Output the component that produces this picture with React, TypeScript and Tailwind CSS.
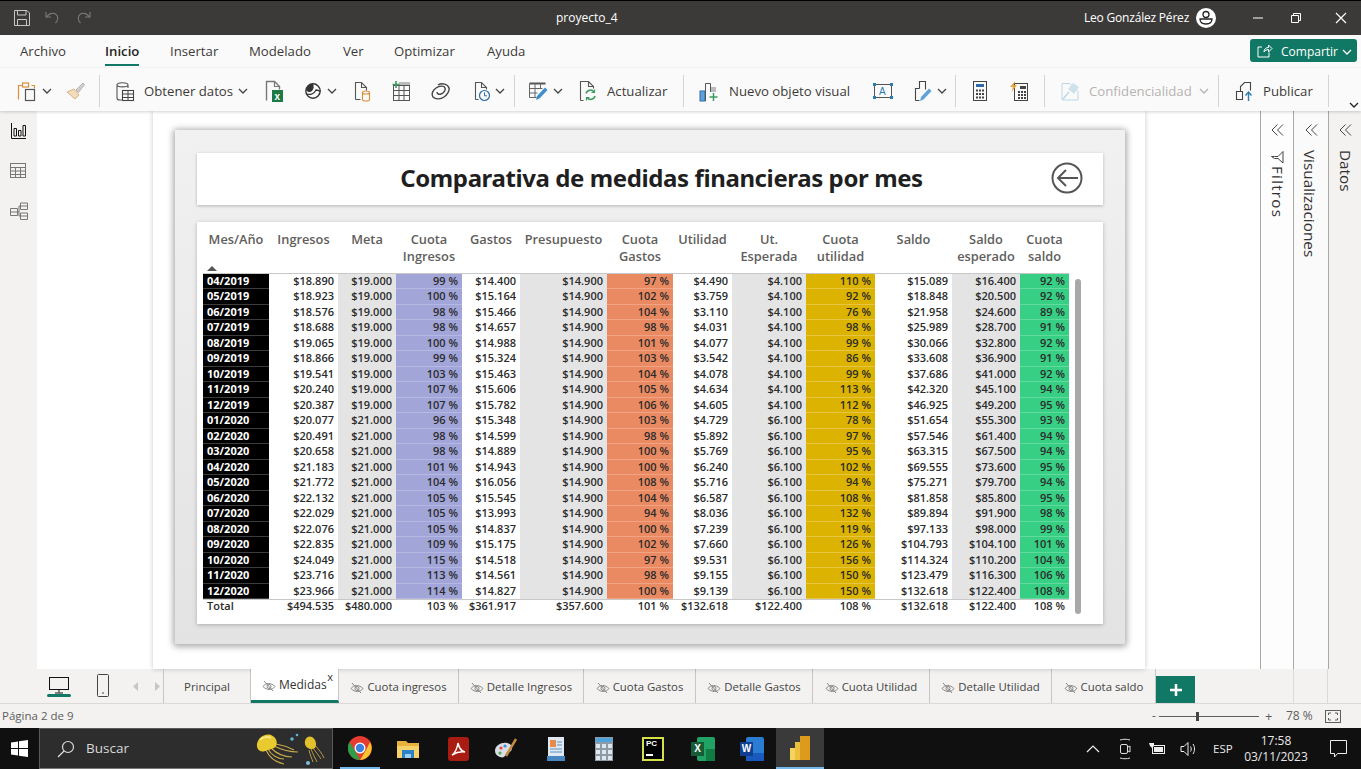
import type { ReactNode } from 'react';

const rows = [
  ['04/2019', '$18.890', '$19.000', '99 %', '$14.400', '$14.900', '97 %', '$4.490', '$4.100', '110 %', '$15.089', '$16.400', '92 %'],
  ['05/2019', '$18.923', '$19.000', '100 %', '$15.164', '$14.900', '102 %', '$3.759', '$4.100', '92 %', '$18.848', '$20.500', '92 %'],
  ['06/2019', '$18.576', '$19.000', '98 %', '$15.466', '$14.900', '104 %', '$3.110', '$4.100', '76 %', '$21.958', '$24.600', '89 %'],
  ['07/2019', '$18.688', '$19.000', '98 %', '$14.657', '$14.900', '98 %', '$4.031', '$4.100', '98 %', '$25.989', '$28.700', '91 %'],
  ['08/2019', '$19.065', '$19.000', '100 %', '$14.988', '$14.900', '101 %', '$4.077', '$4.100', '99 %', '$30.066', '$32.800', '92 %'],
  ['09/2019', '$18.866', '$19.000', '99 %', '$15.324', '$14.900', '103 %', '$3.542', '$4.100', '86 %', '$33.608', '$36.900', '91 %'],
  ['10/2019', '$19.541', '$19.000', '103 %', '$15.463', '$14.900', '104 %', '$4.078', '$4.100', '99 %', '$37.686', '$41.000', '92 %'],
  ['11/2019', '$20.240', '$19.000', '107 %', '$15.606', '$14.900', '105 %', '$4.634', '$4.100', '113 %', '$42.320', '$45.100', '94 %'],
  ['12/2019', '$20.387', '$19.000', '107 %', '$15.782', '$14.900', '106 %', '$4.605', '$4.100', '112 %', '$46.925', '$49.200', '95 %'],
  ['01/2020', '$20.077', '$21.000', '96 %', '$15.348', '$14.900', '103 %', '$4.729', '$6.100', '78 %', '$51.654', '$55.300', '93 %'],
  ['02/2020', '$20.491', '$21.000', '98 %', '$14.599', '$14.900', '98 %', '$5.892', '$6.100', '97 %', '$57.546', '$61.400', '94 %'],
  ['03/2020', '$20.658', '$21.000', '98 %', '$14.889', '$14.900', '100 %', '$5.769', '$6.100', '95 %', '$63.315', '$67.500', '94 %'],
  ['04/2020', '$21.183', '$21.000', '101 %', '$14.943', '$14.900', '100 %', '$6.240', '$6.100', '102 %', '$69.555', '$73.600', '95 %'],
  ['05/2020', '$21.772', '$21.000', '104 %', '$16.056', '$14.900', '108 %', '$5.716', '$6.100', '94 %', '$75.271', '$79.700', '94 %'],
  ['06/2020', '$22.132', '$21.000', '105 %', '$15.545', '$14.900', '104 %', '$6.587', '$6.100', '108 %', '$81.858', '$85.800', '95 %'],
  ['07/2020', '$22.029', '$21.000', '105 %', '$13.993', '$14.900', '94 %', '$8.036', '$6.100', '132 %', '$89.894', '$91.900', '98 %'],
  ['08/2020', '$22.076', '$21.000', '105 %', '$14.837', '$14.900', '100 %', '$7.239', '$6.100', '119 %', '$97.133', '$98.000', '99 %'],
  ['09/2020', '$22.835', '$21.000', '109 %', '$15.175', '$14.900', '102 %', '$7.660', '$6.100', '126 %', '$104.793', '$104.100', '101 %'],
  ['10/2020', '$24.049', '$21.000', '115 %', '$14.518', '$14.900', '97 %', '$9.531', '$6.100', '156 %', '$114.324', '$110.200', '104 %'],
  ['11/2020', '$23.716', '$21.000', '113 %', '$14.561', '$14.900', '98 %', '$9.155', '$6.100', '150 %', '$123.479', '$116.300', '106 %'],
  ['12/2020', '$23.966', '$21.000', '114 %', '$14.827', '$14.900', '100 %', '$9.139', '$6.100', '150 %', '$132.618', '$122.400', '108 %'],
];
const total = ['Total', '$494.535', '$480.000', '103 %', '$361.917', '$357.600', '101 %', '$132.618', '$122.400', '108 %', '$132.618', '$122.400', '108 %'];
const headers = [['Mes/Año'], ['Ingresos'], ['Meta'], ['Cuota', 'Ingresos'], ['Gastos'], ['Presupuesto'], ['Cuota', 'Gastos'], ['Utilidad'], ['Ut.', 'Esperada'], ['Cuota', 'utilidad'], ['Saldo'], ['Saldo', 'esperado'], ['Cuota', 'saldo']];

// background per column, index matches the row arrays
const colBg = [
  'bg-black text-white font-bold pl-1 text-left border-b border-[#3c3c3c]',
  'text-right',
  'bg-[#e4e4e4] text-right',
  'bg-[#a1a5d8] border-b border-[#b5b8e2] text-right',
  'text-right',
  'bg-[#e4e4e4] text-right',
  'bg-[#ea8a62] border-b border-[#f0a484] text-right',
  'text-right',
  'bg-[#e4e4e4] text-right',
  'bg-[#dcb300] border-b border-[#e6c640] text-right',
  'text-right',
  'bg-[#e4e4e4] text-right',
  'bg-[#37cf83] border-b border-[#62da9e] text-right',
];

function Icon({ w, h, children, className = '' }: { w: number; h: number; children: ReactNode; className?: string }) {
  return (
    <svg width={w} height={h} viewBox={`0 0 ${w} ${h}`} fill="none" className={`shrink-0 ${className}`}>
      {children}
    </svg>
  );
}

const Chev = ({ className = '', color = '#444' }: { className?: string; color?: string }) => (
  <Icon w={10} h={6} className={className}>
    <path d="M1 1l4 4 4-4" stroke={color} strokeWidth="1.3" />
  </Icon>
);
const Sep = ({ className = '' }: { className?: string }) => <div className={`w-px h-[32px] bg-[#d6d4d2] shrink-0 ${className}`} />;

function Toolbar() {
  return (
    <div className="h-[43px] pt-[3px] flex items-center bg-[#fbfafa] shadow-[0_1px_3px_rgba(0,0,0,0.18)] relative z-10 text-[#3b3a39] text-[13.2px]">
      <Icon w={22} h={22} className="ml-[16px]">
        <path d="M2.5 19.5V5.5h4M15.5 5.5h3v3" stroke="#d8913a" strokeWidth="1.2" />
        <rect x="6.5" y="3" width="6" height="4" stroke="#d8913a" strokeWidth="1.2" />
        <rect x="9.5" y="9.5" width="9" height="11" stroke="#555" strokeWidth="1.2" />
      </Icon>
      <Chev className="ml-[4px]" />
      <Icon w={20} h={20} className="ml-[14px]">
        <path d="M1 11l7-3 5 6-4 4z" fill="#f3dcbc" stroke="#d9b489" />
        <path d="M10 9l7-7 1.500 1.500-6 8z" fill="#cfcfcf" stroke="#b5b5b5" />
      </Icon>
      <Sep className="ml-[13px]" />
      <Icon w={21} h={22} className="ml-[16px]">
        <path d="M1 5v13c0 1 1 2 3 2h2M1 5c0-3 11-3 11 0v3M1 5c0 2.500 11 2.500 11 0" stroke="#555" strokeWidth="1.1" />
        <rect x="6.500" y="10.500" width="11" height="10" stroke="#444" strokeWidth="1.1" />
        <path d="M6.500 14h11M6.500 17.500h11M12 10.500v10" stroke="#444" />
      </Icon>
      <span className="ml-[7px] w-[89px] pt-[2px] whitespace-nowrap">Obtener datos</span>
      <Chev className="ml-[5px]" />
      <Icon w={18} h={22} className="ml-[17px]">
        <path d="M1.500 20.500v-19h8l5 5v3" stroke="#777" strokeWidth="1.4" />
        <path d="M9.500 1.500v5h5" stroke="#777" strokeWidth="1.2" />
        <rect x="7" y="10" width="11" height="12" fill="#1d7a45" />
        <text x="9.500" y="20" fill="#fff" fontSize="10" fontWeight="700" fontFamily="Liberation Sans">x</text>
      </Icon>
      <Icon w={18} h={18} className="ml-[21px]">
        <circle cx="9" cy="9" r="7.200" stroke="#333" strokeWidth="1.400" />
        <path d="M2 8c1-4 4-6 7-6 1 2 1 5-1 7-2 1.500-4 1.500-6-1z" fill="#333" />
        <path d="M3 12c3 1 7 0 9-4 1.500 0 3 .500 4 1.500" stroke="#333" strokeWidth="1.300" />
      </Icon>
      <Chev className="ml-[5px]" />
      <Icon w={18} h={22} className="ml-[16px]">
        <path d="M2.500 19.500v-17h6l5 5v3M8.500 2.500v5h5M2.500 19.500h5" stroke="#555" strokeWidth="1.1" />
        <path d="M9.500 12.500c0-2 7-2 7 0v7c0 2-7 2-7 0zM9.500 12.500c0 2 7 2 7 0" stroke="#d8913a" strokeWidth="1.1" />
      </Icon>
      <Icon w={20} h={22} className="ml-[20px]">
        <rect x="2.500" y="5.500" width="16" height="15" stroke="#555" />
        <rect x="8" y="2" width="11" height="3" fill="#bbb" />
        <path d="M2.500 10.500h16M2.500 15.500h16M8 5.500v15M13 5.500v15" stroke="#555" />
        <path d="M5 1v7M1.500 4.500h7" stroke="#3c9a62" strokeWidth="1.6" />
      </Icon>
      <Icon w={19} h={19} className="ml-[20px]">
        <path d="M7 3c4-2.500 10-1 11 3 .700 3-2 7-5 9-3 2-8 3-11 0-2-3 0-7 3-9 3-2 8-3 9 0 .700 2-1 5-4 6-2 .700-4 0-4-2" stroke="#444" strokeWidth="1.400" />
      </Icon>
      <Icon w={18} h={22} className="ml-[23px]">
        <path d="M2.500 19.500v-17h6l5 5v2M8.500 2.500v5h5M2.500 19.500h3" stroke="#555" strokeWidth="1.1" />
        <circle cx="11.500" cy="15.500" r="5" stroke="#2b6ca8" strokeWidth="1.2" />
        <path d="M11.500 12.500v3.300h2.500" stroke="#2b6ca8" />
      </Icon>
      <Chev className="ml-[4px]" />
      <Sep className="ml-[9px]" />
      <Icon w={20} h={22} className="ml-[13px]">
        <path d="M1.500 3.500h16" stroke="#555" strokeWidth="2" />
        <path d="M1.500 3.500v14h7M7 3.500v14M12.500 3.500v5M1.500 8.500h13M1.500 13h8" stroke="#666" />
        <path d="M8 20l1-4 8-8.500 2.500 2.500-8 8.500z" fill="#3e8ed0" />
      </Icon>
      <Chev className="ml-[5px]" />
      <Icon w={18} h={22} className="ml-[16px]">
        <path d="M1.500 20.500v-19h8l5 5v2M9.500 1.500v5h5M1.500 20.500h3" stroke="#555" strokeWidth="1.1" />
        <path d="M7 13.500a4.500 4.500 0 018-1.500M16 16a4.500 4.500 0 01-8 1.500" stroke="#3c9a62" strokeWidth="1.5" />
        <path d="M15.500 9.500v3h-3M7.500 20.500v-3h3" stroke="#3c9a62" strokeWidth="1.2" />
      </Icon>
      <span className="ml-[10px] w-[60px] pt-[2px] whitespace-nowrap">Actualizar</span>
      <Sep className="ml-[16px]" />
      <Icon w={20} h={22} className="ml-[15px]">
        <rect x="1" y="11" width="5" height="10" fill="#5ea2dc" stroke="#2b6ca8" />
        <path d="M6.500 21V3.500h5V12" stroke="#555" />
        <rect x="12" y="7" width="5" height="5" fill="#bbb" />
        <path d="M14.500 13v8M10.500 17h8" stroke="#3c9a62" strokeWidth="1.5" />
      </Icon>
      <span className="ml-[10px] w-[123px] pt-[2px] whitespace-nowrap">Nuevo objeto visual</span>
      <Icon w={20} h={18} className="ml-[21px]">
        <rect x="1.500" y="2.500" width="17" height="13" stroke="#555" />
        <path d="M0 1h3v3H0zM17 1h3v3h-3zM0 14h3v3H0zM17 14h3v3h-3z" fill="#2b7cb3" />
        <text x="6" y="13" fill="#2b7cb3" fontSize="10" fontFamily="Liberation Sans">A</text>
      </Icon>
      <Icon w={18} h={22} className="ml-[21px]">
        <path d="M1.500 20.500v-12h4M5.500 8.500v-7h6v8M1.500 20.500h4" stroke="#444" strokeWidth="1.100" />
        <path d="M6 21l1-4 8-8.500 2.500 2.500-8 8.500z" fill="#5ea2dc" />
      </Icon>
      <Chev className="ml-[5px]" />
      <Sep className="ml-[8px]" />
      <Icon w={14} h={20} className="ml-[17px]">
        <rect x="0.500" y="0.500" width="13" height="19" stroke="#444" />
        <rect x="3" y="3" width="8" height="3" fill="#2b6ca8" />
        <path d="M3 8.500h2v2H3zM6 8.500h2v2H6zM9 8.500h2v2H9zM3 12h2v2H3zM6 12h2v2H6zM9 12h2v2H9zM3 15.500h2v2H3zM6 15.500h2v2H6zM9 15.500h2v2H9z" fill="#444" />
      </Icon>
      <Icon w={18} h={20} className="ml-[23px]">
        <rect x="4.500" y="2.500" width="13" height="17" stroke="#444" />
        <path d="M8 10h2v2H8zM11 10h2v2h-2zM14 10h2v2h-2zM8 13h2v2H8zM11 13h2v2h-2zM14 13h2v2h-2zM8 16h2v2H8zM11 16h2v2h-2zM14 16h2v2h-2zM10 5h6v3h-6z" fill="#444" />
        <path d="M5 0L0 6h3L1.500 11 7 4H4z" fill="#e8a33d" />
      </Icon>
      <Sep className="ml-[16px]" />
      <Icon w={19} h={22} className="ml-[16px]">
        <path d="M1 3.500h8l8 8V20H1z" stroke="#bcd8e8" />
        <path d="M7 9l5-6 6 4-5 7z" fill="#cfe2ec" />
        <path d="M2 19l6-7" stroke="#bcd8e8" strokeWidth="1.500" />
      </Icon>
      <span className="ml-[9px] w-[104px] pt-[2px] whitespace-nowrap text-[#b5b3b1]">Confidencialidad</span>
      <Chev className="ml-[6px]" color="#b5b3b1" />
      <Sep className="ml-[9px]" />
      <Icon w={19} h={20} className="ml-[16px]">
        <path d="M1.500 10.500h6v8h-6zM5.500 10.500v-5l4-4h6v8" stroke="#444" strokeWidth="1.100" />
        <path d="M13.500 20v-8M10.500 14.500l3-3.500 3 3.500" stroke="#2b7cb3" strokeWidth="1.400" />
      </Icon>
      <span className="ml-[9px] w-[49px] pt-[2px] whitespace-nowrap">Publicar</span>
      <Sep className="ml-[16px]" />
      <Chev className="ml-[20px] self-end mb-[3px]" color="#222" />
    </div>
  );
}

function Report() {
  return (
    <div className="w-[950px] h-[514px] mt-[19px] ml-[22px] pt-[23px] px-[22px] bg-gradient-to-b from-[#f1f1f1] to-[#e3e3e3] shadow-[0_1px_6px_2px_rgba(0,0,0,0.32)] rounded-[2px]">
      <div className="h-[52px] bg-white shadow-[0_1px_3px_rgba(0,0,0,0.25)] flex items-center relative">
        <h1 className="w-[906px] pl-[23px] pb-[3px] text-center text-[24px] font-bold text-[#1f1f1f] font-['Noto_Sans',sans-serif] tracking-[-0.4px]">Comparativa de medidas financieras por mes</h1>
        <svg width="32" height="32" viewBox="0 0 32 32" fill="none" className="absolute left-[854px] top-[9px]">
          <circle cx="16" cy="16" r="14.500" stroke="#555" strokeWidth="2" />
          <path d="M27 16H7M15 8l-8 8 8 8" stroke="#555" strokeWidth="2" />
        </svg>
      </div>
      <div className="h-[402px] mt-[17px] bg-white shadow-[0_1px_4px_rgba(0,0,0,0.25)] pl-[6px] flex">
        {/* first row is 51.75px so the 15.5px rows round the way the picture does */}
        <div className="grid grid-cols-[66px_69px_58px_66px_58px_87px_66px_59px_74px_69px_77px_68px_49px] auto-rows-[15.5px] grid-rows-[51.75px] w-[866px] text-[11px] font-semibold text-[#2b2b2b]">
          {headers.map((h, i) => (
            <div key={i} className="h-[52px] pt-[9px] border-b border-[#c8c8c8] text-center text-[12.8px] leading-[16.5px] font-semibold text-[#605e5c] relative">
              {h.map((l) => <div key={l}>{l}</div>)}
              {i === 0 && <div className="absolute left-[4px] bottom-[2px] w-0 h-0 border-x-[5px] border-x-transparent border-b-[5px] border-b-[#555]" />}
            </div>
          ))}
          {rows.map((r) =>
            r.map((v, i) => (
              <div key={r[0] + i} className={`leading-[13.5px] pr-[4px] whitespace-nowrap ${colBg[i]}`}>{v}</div>
            ))
          )}
          {total.map((v, i) => (
            <div key={i} className={`h-[17px] leading-[11px] border-t border-[#c8c8c8] whitespace-nowrap pr-[4px] ${i === 0 ? 'pl-1 text-left' : 'text-right'}`}>{v}</div>
          ))}
        </div>
        <div className="w-[6px] h-[335px] mt-[57px] ml-[6px] rounded-full bg-[#a8a8a8]" />
      </div>
    </div>
  );
}

function Panel({ label, bg, width, icon, textClass = '' }: { label: string; bg: string; width: string; icon?: ReactNode; textClass?: string }) {
  return (
    <div className={`${bg} ${width} border-l border-[#a9a8a6] flex flex-col items-center pt-[13px] shrink-0`}>
      <Icon w={13} h={12}>
        <path d="M6.500 .500L1 6l5.500 5.500M12 .500L6.500 6l5.500 5.500" stroke="#444" />
      </Icon>
      <div className="mt-[15px]">{icon}</div>
      <div className={`[writing-mode:vertical-rl] text-[15.3px] font-medium text-[#333] leading-none whitespace-nowrap ${textClass}`}>{label}</div>
    </div>
  );
}

const Hidden = () => (
  <Icon w={14} h={12} className="mr-[3px] mt-[2px]">
    <path d="M1 6.500c3-4 8-4 12 0-3 4-8 4-12 0z" stroke="#8a8886" />
    <circle cx="7" cy="6.500" r="2" stroke="#8a8886" />
    <path d="M2 1l9 10" stroke="#8a8886" />
  </Icon>
);

function PageTab({ w, label, hidden = true }: { w: string; label: string; hidden?: boolean }) {
  return (
    <div className={`${w} h-full pt-[1px] border-r border-[#c8c6c4] flex items-center justify-center text-[11.4px] text-[#444]`}>
      {hidden && <Hidden />}
      <span className="whitespace-nowrap">{label}</span>
    </div>
  );
}

function Jellyfish() {
  return (
    <svg width="76" height="38" viewBox="0 0 76 38" fill="none" className="shrink-0">
      <path d="M13 19c3 6 10 10 16 10M16 18c5 5 13 9 21 9M19 16c6 3 14 6 24 6M11 20c3 7 9 12 18 14M21 14c6 1 12 3 18 6" stroke="#c9a94a" strokeWidth="1.100" />
      <path d="M2 17C1 9 9 3 16 5c5 2 7 7 5 11-2 3-5 3-8 4-4 2-9 3-11-3z" fill="#e8c92e" />
      <path d="M5 10c3-3 8-4 11-2" stroke="#f7e783" strokeWidth="2" />
      <path d="M56 19c2 5 4 9 6 13M58 18c3 4 6 8 8 11M60 15c3 4 7 8 9 13M54 20c1 5 3 9 4 12" stroke="#b89a48" strokeWidth="1" />
      <path d="M50 14c-1-5 3-9 7-7 4 2 5 8 3 11-3 2-9 1-10-4z" fill="#e2c22c" />
      <circle cx="37" cy="9" r="1.800" fill="#5fb6dd" />
      <circle cx="42" cy="5" r="1.300" fill="#5fb6dd" />
      <circle cx="53" cy="33" r="2" fill="#7cc0e0" />
    </svg>
  );
}

function Taskbar() {
  return (
    <div className="h-[41px] bg-[#101010] flex items-stretch text-white shrink-0 relative">
      <div className="w-[39px] flex items-center justify-center">
        <Icon w={17} h={17}>
          <path d="M0 2.500l7-1v6.500H0zM8 1.300l9-1.300v8H8zM0 9h7v6.500l-7-1zM8 9h9v8l-9-1.300z" fill="#fff" />
        </Icon>
      </div>
      <div className="w-[294px] bg-[#2d2d2d] border border-[#5a5a5a] border-b-[#777] flex items-center pl-[17px]">
        <Icon w={18} h={18}>
          <circle cx="11" cy="7" r="5.500" stroke="#ddd" strokeWidth="1.200" />
          <path d="M7 11l-6 6" stroke="#ddd" strokeWidth="1.200" />
        </Icon>
        <span className="ml-[11px] text-[13.5px] text-[#d8d8d8] w-[169px]">Buscar</span>
        <Jellyfish />
      </div>
      <div className="w-[40px] ml-[7px] flex items-center justify-center border-b-2 border-[#76b9ed]">
        <Icon w={24} h={24}>
          <circle cx="12" cy="12" r="12" fill="#e53b30" />
          <path d="M12 24a12 12 0 01-10.500-18L7 15l5 9z" fill="#2e9e48" />
          <path d="M12 24l6-10 4-8a12 12 0 01-10 18z" fill="#f6c42d" />
          <circle cx="12" cy="12" r="5.500" fill="#fff" />
          <circle cx="12" cy="12" r="4.200" fill="#3b82e0" />
        </Icon>
      </div>
      <div className="w-[56px] flex items-center justify-center">
        <Icon w={22} h={18}>
          <path d="M0 1h9l2 2h11v15H0z" fill="#e8b23a" />
          <path d="M0 6h22v12H0z" fill="#f5d26a" />
          <rect x="5" y="10" width="12" height="8" fill="#2b82c9" />
          <rect x="8" y="14" width="6" height="4" fill="#9fd0ee" />
        </Icon>
      </div>
      <div className="w-[44px] flex items-center justify-center">
        <div className="w-[21px] h-[24px] rounded-[3px] bg-[#a81c12] flex items-center justify-center">
          <Icon w={15} h={15}>
            <path d="M1 14c3-2 5-6 6-12 1 5 3 8 7 9-4-.500-8 0-13 3z" stroke="#fff" strokeWidth="1.500" />
          </Icon>
        </div>
      </div>
      <div className="w-[52px] flex items-center justify-center">
        <Icon w={24} h={24}>
          <path d="M1 14c0-6 7-9 12-8 5 1 6 5 4 8-2 2-4 0-5 3-1 3-3 4-6 3-3-1-5-3-5-6z" fill="#d8dde6" />
          <circle cx="7" cy="11" r="1.600" fill="#e24a3b" />
          <circle cx="11" cy="9" r="1.600" fill="#3e8ed0" />
          <circle cx="6" cy="16" r="1.600" fill="#4caf50" />
          <path d="M12 19L22 2" stroke="#c28a3f" strokeWidth="2.500" />
        </Icon>
      </div>
      <div className="w-[48px] flex items-center justify-center">
        <Icon w={18} h={24}>
          <rect x="1" y="0" width="16" height="22" fill="#dfe9f3" />
          <rect x="3" y="3" width="6" height="7" fill="#e78b4c" />
          <path d="M10 5h5M10 8h5M3 12h12M3 15h12" stroke="#5a8fc0" />
          <rect x="0" y="19" width="18" height="5" fill="#4a87c0" />
        </Icon>
      </div>
      <div className="w-[48px] flex items-center justify-center">
        <Icon w={18} h={24}>
          <rect width="18" height="24" fill="#8d9aa8" />
          <rect x="1" y="1" width="16" height="4" fill="#4fa3dd" />
          <path d="M1 7h4v4H1zM7 7h4v4H7zM13 7h4v4h-4zM1 13h4v4H1zM7 13h4v4H7zM13 13h4v4h-4zM1 19h4v4H1zM7 19h4v4H7zM13 19h4v4h-4z" fill="#dfe6ec" />
        </Icon>
      </div>
      <div className="w-[50px] flex items-center justify-center">
        <div className="w-[22px] h-[24px] bg-black border-2 border-[#d5e04a] flex flex-col pl-[2px] text-[8px] font-bold font-['Liberation_Sans',sans-serif] leading-[10px] text-white">
          PC
          <div className="w-[7px] h-[2px] bg-white mt-[5px]" />
        </div>
      </div>
      <div className="w-[50px] flex items-center justify-center">
        <div className="w-[24px] h-[24px] relative">
          <div className="absolute inset-y-0 right-0 w-[18px] bg-[#21a366] rounded-[2px]" />
          <div className="absolute right-0 bottom-0 w-[9px] h-[12px] bg-[#107c41]" />
          <div className="absolute left-0 top-[5px] w-[13px] h-[14px] bg-[#185c37] text-[10px] font-bold text-center leading-[14px] font-['Liberation_Sans',sans-serif]">X</div>
        </div>
      </div>
      <div className="w-[48px] flex items-center justify-center">
        <div className="w-[24px] h-[24px] relative">
          <div className="absolute inset-y-0 right-0 w-[18px] bg-[#2b7cd3] rounded-[2px]" />
          <div className="absolute right-0 bottom-0 w-[18px] h-[8px] bg-[#185abd]" />
          <div className="absolute left-0 top-[5px] w-[13px] h-[14px] bg-[#103f91] text-[10px] font-bold text-center leading-[14px] font-['Liberation_Sans',sans-serif]">W</div>
        </div>
      </div>
      <div className="w-[48px] bg-[#3a3a3a] flex items-center justify-center border-b-2 border-[#76b9ed]">
        <Icon w={20} h={24}>
          <rect x="0" y="12" width="9" height="12" fill="#f4d35e" />
          <rect x="5" y="6" width="8" height="18" fill="#ecbf3c" />
          <rect x="10" y="0" width="10" height="24" fill="#dd9a1c" />
        </Icon>
      </div>
      <div className="ml-auto flex items-center text-[#e8e8e8]">
        <Icon w={14} h={8}>
          <path d="M1 7l6-6 6 6" stroke="#eee" strokeWidth="1.200" />
        </Icon>
        <Icon w={12} h={22} className="ml-[19px]">
          <path d="M1 2c3-1 7-1 10 0M1 20c3 1 7 1 10 0" stroke="#ddd" />
          <rect x="1.500" y="6.500" width="7" height="9" rx="1.500" stroke="#ddd" />
          <path d="M9 9l2-1v6l-2-1" stroke="#ddd" />
        </Icon>
        <Icon w={16} h={14} className="ml-[18px]">
          <rect x="3.500" y="3.500" width="12" height="8" stroke="#eee" />
          <rect x="5" y="5" width="9" height="5" fill="#eee" />
          <path d="M0 1h5v3l-2 2-2-2z" fill="#eee" />
        </Icon>
        <Icon w={16} h={16} className="ml-[15px]">
          <path d="M1 5.500h3l4-4v13l-4-4H1z" stroke="#eee" />
          <path d="M10.500 5.500c1 1.500 1 3.500 0 5M13 3c2 3 2 7 0 10" stroke="#eee" />
        </Icon>
        <span className="ml-[17px] text-[11.5px] w-[20px] whitespace-nowrap">ESP</span>
        <div className="ml-[9px] w-[68px] text-center text-[12px] leading-[16px]">
          <div>17:58</div>
          <div>03/11/2023</div>
        </div>
        <Icon w={17} h={18} className="ml-[20px] mr-[14px]">
          <path d="M.500.500h16v13h-9l-3 3.500v-3.500h-4z" stroke="#eee" />
        </Icon>
      </div>
    </div>
  );
}

export default function App() {
  return (
    <div className="w-[1361px] h-[769px] overflow-hidden flex flex-col bg-white font-['Open_Sans',sans-serif]">
      <div className="h-[35px] bg-[#3b3a39] border-t border-black flex items-center text-white shrink-0">
        <Icon w={16} h={16} className="ml-[14px]">
          <path d="M.500.500h12.500l2.500 2.500v12.500H.500z" stroke="#c8c6c4" />
          <path d="M3.500.500v4.500h8.500V.500M3.500 15.500v-6h9v6" stroke="#c8c6c4" />
        </Icon>
        <Icon w={16} h={14} className="ml-[15px]">
          <path d="M1 1v5h5M1.500 6c2-3 6-5 9-3s3 6 0 9" stroke="#7b7a79" strokeWidth="1.100" />
        </Icon>
        <Icon w={16} h={14} className="ml-[14px]">
          <path d="M15 1v5h-5M14.500 6c-2-3-6-5-9-3s-3 6 0 9" stroke="#7b7a79" strokeWidth="1.100" />
        </Icon>
        <span className="ml-[465px] w-[60px] text-[12px] whitespace-nowrap">proyecto_4</span>
        <span className="ml-[468px] w-[103px] text-[12px] tracking-[-0.2px] whitespace-nowrap">Leo González Pérez</span>
        <Icon w={20} h={20} className="ml-[9px]">
          <circle cx="10" cy="10" r="10" fill="#fff" />
          <circle cx="10" cy="6.500" r="3" stroke="#222" strokeWidth="1.300" />
          <path d="M4 11h12c0 3-2 5-6 5s-6-2-6-5z" stroke="#222" strokeWidth="1.300" />
        </Icon>
        <Icon w={10} h={2} className="ml-[37px]">
          <path d="M0 1h10" stroke="#fff" />
        </Icon>
        <Icon w={10} h={10} className="ml-[28px]">
          <path d="M.500 2.500h7v7h-7zM2.500 2.500v-2h7v7h-2" stroke="#fff" />
        </Icon>
        <Icon w={12} h={12} className="ml-[34px]">
          <path d="M1 1l10 10M11 1L1 11" stroke="#fff" strokeWidth="1.200" />
        </Icon>
      </div>

      <div className="h-[33px] bg-[#fbfafa] flex items-stretch text-[13.2px] text-[#3b3a39] shrink-0 relative">
        <span className="ml-[20px] w-[47px] pt-[7px]">Archivo</span>
        <span className="ml-[38px] w-[34px] pt-[7px] font-semibold text-[#252423] relative">
          Inicio
          <span className="absolute left-0 right-0 top-[29px] h-[2px] bg-[#117865]" />
        </span>
        <span className="ml-[31px] w-[46px] pt-[7px]">Insertar</span>
        <span className="ml-[33px] w-[62px] pt-[7px]">Modelado</span>
        <span className="ml-[32px] w-[20px] pt-[7px]">Ver</span>
        <span className="ml-[31px] w-[61px] pt-[7px]">Optimizar</span>
        <span className="ml-[32px] w-[38px] pt-[7px]">Ayuda</span>
        <div className="ml-[725px] mt-[4px] w-[107px] h-[23px] rounded-[3px] bg-[#117865] text-white text-[12px] flex items-center pl-[7px]">
          <Icon w={16} h={14}>
            <path d="M12 8.500v4.500H1V3h4M7 8c0-3 2-4.500 4.500-4.500V1L15 4.500 11.500 8V5.500C9.500 5.500 8 6.500 7 8z" stroke="#fff" />
          </Icon>
          <span className="ml-[8px] pt-[2px] whitespace-nowrap">Compartir</span>
          <Chev className="ml-[4px] mt-[2px]" color="#fff" />
        </div>
      </div>

      <Toolbar />

      <div className="flex-1 flex min-h-0">
        <div className="w-[37px] bg-[#f3f2f1] flex flex-col items-center pt-[12px] shrink-0">
          <Icon w={16} h={16}>
            <path d="M.500 0v15.500H15" stroke="#111" />
            <path d="M3 5.500h2.500V13H3zM7.500 7.500H10V13H7.500zM12 2.500h2.500V13H12z" stroke="#111" />
          </Icon>
          <Icon w={17} h={16} className="mt-[24px]">
            <rect x=".500" y=".500" width="15" height="14" stroke="#777" />
            <path d="M.500 4.500h15M.500 8h15M.500 11.500h15M5.500 4.500v10M10.500 4.500v10" stroke="#777" />
          </Icon>
          <Icon w={18} h={18} className="mt-[23px]">
            <path d="M.500 6.500h7v7h-7zM.500 10h7M10.500 1h7v6.500h-7zM10.500 4h7M10.500 11h7v6.500h-7zM10.500 14h7M7.500 10h1.500V4h1.500M9 10v4h1.500" stroke="#777" />
          </Icon>
        </div>
        <div className="w-[1223px] flex shrink-0 bg-white">
          <div className="w-[116px] shrink-0" />
          <div className="w-[992px] shrink-0 shadow-[0_0_5px_rgba(0,0,0,0.22)] relative">
            <Report />
          </div>
        </div>
        <Panel label="Filtros" bg="bg-[#fdfdfd]" width="w-[33px]" textClass="mt-[2px] tracking-[1.2px]" icon={
          <Icon w={13} h={13}>
            <path d="M12 .500V12L7 7.500H3.500L.500 5.500h3H7z" stroke="#444" />
          </Icon>
        } />
        <Panel label="Visualizaciones" bg="bg-[#fbfafa]" width="w-[35px]" textClass="mr-[4px] -mt-[1px]" />
        <Panel label="Datos" bg="bg-[#f3f2f1]" width="w-[33px]" textClass="-mt-[1px]" />
      </div>

      <div className="h-[35px] bg-[#f3f2f1] border-b border-[#dcdad8] flex items-stretch shrink-0">
        <div className="w-[164px] border-r border-[#c8c6c4] flex items-start relative shrink-0">
          <Icon w={20} h={17} className="ml-[49px] mt-[8px]">
            <rect x=".500" y=".500" width="19" height="12" stroke="#111" />
            <path d="M10 13v2.500M6 16h8" stroke="#111" />
          </Icon>
          <div className="absolute left-[47px] bottom-[6px] w-[24px] h-[3px] rounded bg-[#117865]" />
          <Icon w={12} h={23} className="ml-[28px] mt-[5px]">
            <rect x=".500" y=".500" width="11" height="22" rx="1" stroke="#444" />
            <path d="M5 19h2" stroke="#444" />
          </Icon>
          <Icon w={5} h={9} className="ml-[24px] mt-[13px]">
            <path d="M5 0v9L0 4.500z" fill="#c8c6c4" />
          </Icon>
          <Icon w={5} h={9} className="ml-[17px] mt-[13px]">
            <path d="M0 0v9l5-4.500z" fill="#c8c6c4" />
          </Icon>
        </div>
        <PageTab w="w-[87px]" label="Principal" hidden={false} />
        <div className="w-[88px] h-full bg-white border-r border-[#c8c6c4] border-b-[3px] border-b-[#117865] flex items-center pl-[11px] text-[12px] text-[#333] relative">
          <Hidden />
          <span className="whitespace-nowrap">Medidas</span>
          <span className="absolute right-[5px] top-[2px] text-[11px] leading-none">x</span>
        </div>
        <PageTab w="w-[120px]" label="Cuota ingresos" />
        <PageTab w="w-[125px]" label="Detalle Ingresos" />
        <PageTab w="w-[112px]" label="Cuota Gastos" />
        <PageTab w="w-[117px]" label="Detalle Gastos" />
        <PageTab w="w-[117px]" label="Cuota Utilidad" />
        <PageTab w="w-[122px]" label="Detalle Utilidad" />
        <PageTab w="w-[104px]" label="Cuota saldo" />
        <div className="w-[39px] h-[27px] mt-[7px] bg-[#117865] flex items-center justify-center">
          <Icon w={12} h={12}>
            <path d="M6 0v12M0 6h12" stroke="#fff" strokeWidth="2.500" />
          </Icon>
        </div>
        <div className="ml-[98px] w-[35px] border-r border-l border-[#dcdad8]" />
      </div>

      <div className="h-[24px] bg-[#f3f2f1] flex items-center text-[11.5px] text-[#605e5c] shrink-0">
        <span className="ml-[2px] w-[72px] whitespace-nowrap">Página 2 de 9</span>
        <div className="ml-[1078px] flex items-center w-[122px] relative">
          <span className="w-[7px] text-[12px] leading-none">-</span>
          <div className="w-[100px] h-px bg-[#605e5c] relative">
            <div className="absolute left-[37px] -top-[4px] w-[3px] h-[9px] bg-[#444]" />
          </div>
          <span className="ml-[6px] text-[13px] leading-none">+</span>
        </div>
        <span className="ml-[12px] w-[28px] text-[12px] whitespace-nowrap">78 %</span>
        <Icon w={16} h={13} className="ml-[11px]">
          <rect x=".500" y=".500" width="15" height="12" stroke="#605e5c" />
          <path d="M3.500 5V3H6M12.500 5V3H10M3.500 8v2H6M12.500 8v2H10" stroke="#605e5c" />
        </Icon>
      </div>

      <Taskbar />
    </div>
  );
}
